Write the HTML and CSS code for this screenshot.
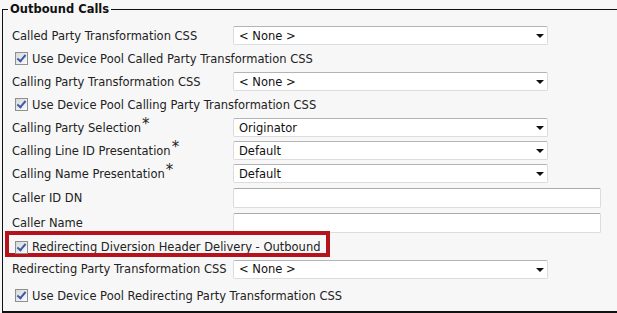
FILE: index.html
```html
<!DOCTYPE html>
<html lang="en">
<head>
  <meta charset="UTF-8">
  <title>Outbound Calls</title>
  <link rel="stylesheet" href="styles.css">
</head>
<body>

  <fieldset class="group">
    <legend>Outbound Calls</legend>

    <div class="row">
      <label class="lbl">Called Party Transformation CSS</label>
      <div class="sel"><select><option>&lt; None &gt;</option></select></div>
    </div>
    <div class="row check">
      <span class="cb"></span><span>Use Device Pool Called Party Transformation CSS</span>
    </div>
    <div class="row">
      <label class="lbl">Calling Party Transformation CSS</label>
      <div class="sel"><select><option>&lt; None &gt;</option></select></div>
    </div>
    <div class="row check">
      <span class="cb"></span><span>Use Device Pool Calling Party Transformation CSS</span>
    </div>
    <div class="row">
      <label class="lbl">Calling Party Selection<span class="req">*</span></label>
      <div class="sel"><select><option>Originator</option></select></div>
    </div>
    <div class="row">
      <label class="lbl">Calling Line ID Presentation<span class="req">*</span></label>
      <div class="sel"><select><option>Default</option></select></div>
    </div>
    <div class="row">
      <label class="lbl">Calling Name Presentation<span class="req">*</span></label>
      <div class="sel"><select><option>Default</option></select></div>
    </div>
    <div class="row tall">
      <label class="lbl">Caller ID DN</label>
      <input type="text" class="txt">
    </div>
    <div class="row tall">
      <label class="lbl">Caller Name</label>
      <input type="text" class="txt">
    </div>
    <div class="row mark-row">
      <!-- zaznaczenie na zrzucie -->
      <span class="marked"><span class="cb"></span><span>Redirecting Diversion Header Delivery - Outbound</span></span>
    </div>
    <div class="row short">
      <label class="lbl">Redirecting Party Transformation CSS</label>
      <div class="sel"><select><option>&lt; None &gt;</option></select></div>
    </div>
    <div class="row check last">
      <span class="cb"></span><span>Use Device Pool Redirecting Party Transformation CSS</span>
    </div>
  </fieldset>

</body>
</html>
```

FILE: styles.css
```css
body { margin: 0; background: #f7f7f7; font-family: "DejaVu Sans", Verdana, sans-serif; font-size: 11.5px; color: #222; overflow: hidden; }
/* prawa krawędź ramki jest poza kadrem */
.group { margin: 0 0 0 2px; padding: 6px 0 0 0; min-width: 0; border: 1px solid #111; border-right: none; border-bottom-width: 2px; }
.group legend { font-weight: bold; font-size: 11.5px; line-height: 18px; padding: 0 2px; margin-left: 5px; color: #111; }
.row { display: flex; align-items: center; height: 23px; padding-left: 9px; white-space: nowrap; }
.row.tall { height: 25px; }
.row.short { height: 22px; }
.lbl { width: 221px; flex: none; }
.req { font-size: 15px; position: relative; top: -3px; margin-left: 1px; line-height: 0; }
.check { padding-left: 12px; }
.check .cb { margin-right: 4px; }
.row.last { height: 31px; }

.sel { position: relative; width: 315px; height: 19px; }
.sel select { appearance: none; -webkit-appearance: none; width: 100%; height: 100%; margin: 0; padding: 0 0 0 5px; font: inherit; color: #111; background: #fff; border: 1px solid #dcdcdc; border-top-color: #b4b4b4; border-radius: 2px; outline: none; }
.sel::after { content: ""; position: absolute; right: 4px; top: 8px; border-left: 4px solid transparent; border-right: 4px solid transparent; border-top: 4px solid #111; pointer-events: none; }

.txt { width: 368px; height: 20px; box-sizing: border-box; margin: 0; padding: 0 4px; font: inherit; background: #fff; border: 1px solid #dcdcdc; border-top-color: #aaa; border-radius: 2px; }

.cb { display: inline-block; position: relative; width: 13px; height: 13px; box-sizing: border-box; flex: none; border: 1px solid #8e8f8f; background: linear-gradient(135deg, #d8d8d8, #fbfbfb); }
.cb::after { content: ""; position: absolute; left: 3px; top: 0; width: 3px; height: 7px; border: solid #3b5ca6; border-width: 0 2px 2px 0; transform: rotate(40deg); }

.mark-row { align-items: flex-start; padding-left: 6px; }
.marked { display: flex; align-items: flex-start; gap: 4px; width: 317px; height: 18px; box-sizing: border-box; padding: 6px 0 0 6px; line-height: 13px; outline: 4px solid #b5121b; }
```
